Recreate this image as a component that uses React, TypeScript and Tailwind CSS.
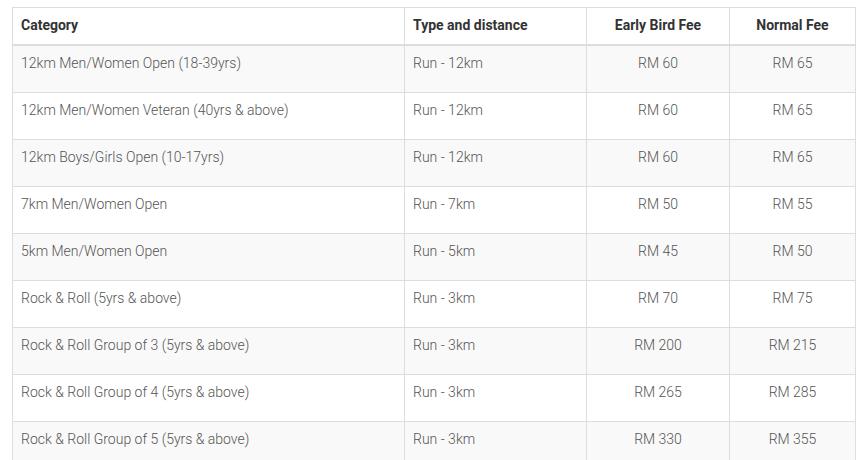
const rows = [
  ["12km Men/Women Open (18-39yrs)", "Run - 12km", "RM 60", "RM 65"],
  ["12km Men/Women Veteran (40yrs & above)", "Run - 12km", "RM 60", "RM 65"],
  ["12km Boys/Girls Open (10-17yrs)", "Run - 12km", "RM 60", "RM 65"],
  ["7km Men/Women Open", "Run - 7km", "RM 50", "RM 55"],
  ["5km Men/Women Open", "Run - 5km", "RM 45", "RM 50"],
  ["Rock & Roll (5yrs & above)", "Run - 3km", "RM 70", "RM 75"],
  ["Rock & Roll Group of 3 (5yrs & above)", "Run - 3km", "RM 200", "RM 215"],
  ["Rock & Roll Group of 4 (5yrs & above)", "Run - 3km", "RM 265", "RM 285"],
  ["Rock & Roll Group of 5 (5yrs & above)", "Run - 3km", "RM 330", "RM 355"],
];

export default function App() {
  return (
    <div className="min-h-[460px] bg-white pt-[7px] pl-[12px] font-['Roboto','Liberation_Sans',sans-serif] text-[14px] leading-[20px]">
      <table className="w-[843px] table-fixed border-collapse">
        <colgroup>
          <col className="w-[392px]" />
          <col className="w-[182px]" />
          <col className="w-[143px]" />
          <col className="w-[126px]" />
        </colgroup>
        <thead>
          <tr>
            <th className="border border-[#dddddd] border-b-2 px-2 pt-[7px] pb-[9px] text-left font-bold text-[#333333]">Category</th>
            <th className="border border-[#dddddd] border-b-2 px-2 pt-[7px] pb-[9px] text-left font-bold text-[#333333]">Type and distance</th>
            <th className="border border-[#dddddd] border-b-2 px-2 pt-[7px] pb-[9px] text-center font-bold text-[#333333]">Early Bird Fee</th>
            <th className="border border-[#dddddd] border-b-2 px-2 pt-[7px] pb-[9px] text-center font-bold text-[#333333]">Normal Fee</th>
          </tr>
        </thead>
        <tbody>
          {rows.map((r, i) => (
            <tr key={i} className={i % 2 === 0 ? "bg-[#f9f9f9]" : "bg-white"}>
              <td className="border border-[#dddddd] px-2 pt-[7px] pb-[9px] align-top font-light text-[#555555]">
                <p className="mb-[10px]">{r[0]}</p>
              </td>
              <td className="border border-[#dddddd] px-2 pt-[7px] pb-[9px] align-top font-light text-[#555555]">
                <p className="mb-[10px]">{r[1]}</p>
              </td>
              <td className="border border-[#dddddd] px-2 pt-[7px] pb-[9px] align-top text-center font-light text-[#555555]">
                <p className="mb-[10px]">{r[2]}</p>
              </td>
              <td className="border border-[#dddddd] px-2 pt-[7px] pb-[9px] align-top text-center font-light text-[#555555]">
                <p className="mb-[10px]">{r[3]}</p>
              </td>
            </tr>
          ))}
        </tbody>
      </table>
    </div>
  );
}
